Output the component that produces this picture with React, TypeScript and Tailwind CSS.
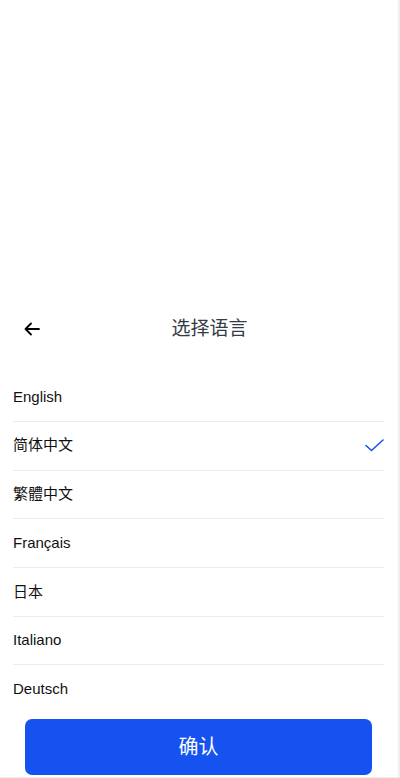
import React, { useState } from 'react';

const languages = ['English', '简体中文', '繁體中文', 'Français', '日本', 'Italiano', 'Deutsch'];

const font = { fontFamily: '"Liberation Sans", "Noto Sans CJK SC", sans-serif' };

const BackArrow: React.FC = () => (
  <svg width="16" height="14" viewBox="0 0 16 14" fill="none" stroke="#000" strokeWidth="1.8" strokeLinecap="round" strokeLinejoin="round">
    <path d="M15 7H1.5M7 1.5L1.5 7L7 12.5" />
  </svg>
);

const Check: React.FC = () => (
  <svg width="19" height="13" viewBox="0 0 19 13" fill="none" stroke="#1a52f0" strokeWidth="1.6" strokeLinecap="round" strokeLinejoin="round">
    <path d="M1 6.5L6.5 11.5L18 1" />
  </svg>
);

export default function App() {
  const [selected, setSelected] = useState('简体中文');

  return (
    <div className="w-[400px] h-[778px] bg-[#efefef]" style={font}>
      <div className="w-[398px] h-[777px] bg-white flex flex-col">
        <div className="flex-1" />

        <div className="h-[44px] flex items-center pl-[24px] pr-[25px]">
          <button className="w-[16px] h-[14px] flex items-center justify-center">
            <BackArrow />
          </button>
          <h1 className="flex-1 text-center pl-[6px] text-[19px] text-[#343a46] font-normal">选择语言</h1>
        </div>

        <ul className="mt-[22px] pl-[13px] pr-[14px]">
          {languages.map((lang, i) => (
            <li
              key={lang}
              onClick={() => setSelected(lang)}
              className={`h-[48.7px] flex items-center justify-between text-[15px] text-[#111] ${
                i < languages.length - 1 ? 'border-b border-[#ebebeb]' : ''
              }`}
            >
              <span>{lang}</span>
              {selected === lang && <Check />}
            </li>
          ))}
        </ul>

        <div className="mt-[5px] pb-[2px] pl-[25px] pr-[26px]">
          <button className="w-full h-[56px] rounded-[7px] bg-[#1652f0] text-white text-[20px]">确认</button>
        </div>
      </div>
    </div>
  );
}
